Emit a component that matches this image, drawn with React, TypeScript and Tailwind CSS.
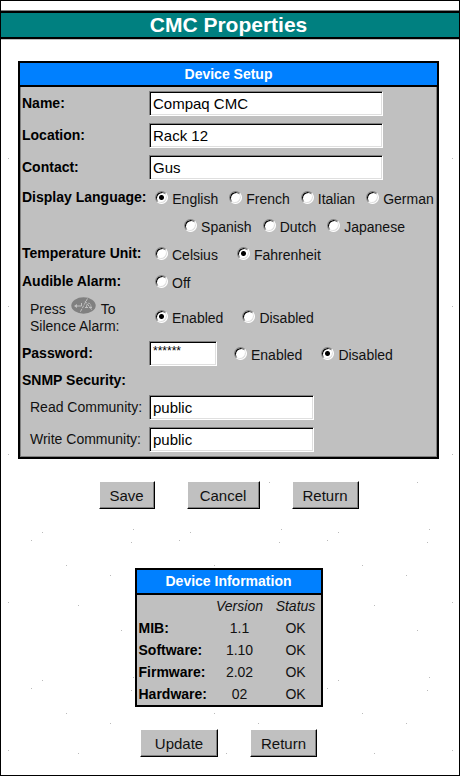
import React from "react";

const font = "font-['Liberation_Sans',Arial,sans-serif]";

const bevelIn =
  "border border-t-[#808080] border-l-[#808080] border-r-white border-b-white shadow-[inset_1px_1px_0_#000,inset_-1px_-1px_0_#dfdfdf]";

function TextField({
  id,
  value,
  width,
  text = "text-[15px]",
}: {
  id: string;
  value: string;
  width: string;
  text?: string;
}) {
  return (
    <input
      id={id}
      type="text"
      autoComplete="off"
      defaultValue={value}
      className={`h-[25px] ${width} px-[3px] bg-white ${text} text-black outline-none ${bevelIn}`}
    />
  );
}

function Radio({
  name,
  text,
  checked,
}: {
  name: string;
  text: string;
  checked?: boolean;
}) {
  return (
    <label className="flex items-center gap-1 whitespace-nowrap">
      <input
        type="radio"
        name={name}
        value={text}
        defaultChecked={checked}
        className={`appearance-none shrink-0 size-[13px] rounded-full bg-white checked:bg-[radial-gradient(circle,#000_2px,#fff_3px)] ${bevelIn}`}
      />
      <span className="pt-1">{text}</span>
    </label>
  );
}

function Button({ text, width }: { text: string; width: string }) {
  return (
    <button
      type="button"
      className={`h-7 ${width} bg-[#c0c0c0] text-[15px] border border-t-white border-l-white border-r-black border-b-black shadow-[inset_-1px_-1px_0_#808080]`}
    >
      {text}
    </button>
  );
}

function Row({
  height,
  label,
  children,
}: {
  height: string;
  label?: React.ReactNode;
  children?: React.ReactNode;
}) {
  return (
    <div className={`flex items-center ${height}`}>
      <div className="w-[128px] shrink-0 pl-px whitespace-nowrap">{label}</div>
      {children}
    </div>
  );
}

function SilenceIcon() {
  return (
    <svg width="25" height="17" viewBox="0 0 25 17" aria-hidden="true">
      <ellipse cx="12.5" cy="8.5" rx="12.2" ry="8.2" fill="#808080" />
      <g fill="none" stroke="#c0c0c0" strokeWidth="1">
        <path d="M10.500 6v3H4" />
        <path d="M3 9l3-2v4z" fill="#c0c0c0" stroke="none" />
        <path d="M16.500 1.500L9 15.500" strokeDasharray="3 1" />
        <path d="M14 10.500h8M15.500 10c0-5 4.500-5 4.500 0M14 4l7 9" strokeDasharray="3 1" />
      </g>
    </svg>
  );
}

const rows = [
  ["MIB:", "1.1", "OK"],
  ["Software:", "1.10", "OK"],
  ["Firmware:", "2.02", "OK"],
  ["Hardware:", "02", "OK"],
];

// speckles of the background tile, repeated every 148px
const specks = [
  [41, 87],
  [30, 95],
  [132, 84],
  [130, 97],
  [65, 120],
  [109, 130],
  [7, 9],
  [77, 12],
  [120, 37],
];

function Speckles() {
  return (
    <svg className="absolute inset-0 -z-10 size-full" aria-hidden="true">
      <pattern
        id="specks"
        width="148"
        height="148"
        patternUnits="userSpaceOnUse"
      >
        {specks.map(([x, y]) => (
          <rect key={`${x}-${y}`} x={x} y={y} width="1" height="1" fill="#bbb" />
        ))}
      </pattern>
      <rect width="100%" height="100%" fill="url(#specks)" />
    </svg>
  );
}

export default function App() {
  return (
    <main
      className={`relative isolate min-h-screen border border-black bg-white pt-[10px] pb-[17px] text-[14px] leading-[17px] text-[#111] ${font}`}
    >
      <Speckles />
      <h1 className="h-7 pl-[17px] pr-5 border-y-2 border-black bg-[#008080] text-center text-[21px] leading-6 font-bold text-white shadow-[0_-1px_0_#808080,0_1px_0_#c0c0c0]">
        CMC Properties
      </h1>

      <div className="flex flex-col items-center pl-[17px] pr-5 pt-[22px]">
        <form className="w-full border-2 border-black bg-[#c0c0c0]">
          <h2 className="h-6 border-b-2 border-black bg-[#0080ff] text-center leading-[23px] font-bold text-white">
            Device Setup
          </h2>
          <div className="border border-t-0 border-[#808080] pb-px">
            <Row
              height="h-8"
              label={<label htmlFor="name" className="font-bold text-black">Name:</label>}
            >
              <TextField id="name" value="Compaq CMC" width="w-[234px]" />
            </Row>
            <Row
              height="h-8"
              label={<label htmlFor="location" className="font-bold text-black">Location:</label>}
            >
              <TextField id="location" value="Rack 12" width="w-[234px]" />
            </Row>
            <Row
              height="h-8"
              label={<label htmlFor="contact" className="font-bold text-black">Contact:</label>}
            >
              <TextField id="contact" value="Gus" width="w-[234px]" />
            </Row>

            <Row height="h-7" label={<b className="text-black">Display Language:</b>}>
              <div className="flex flex-1 justify-center gap-[11px] pl-1">
                <Radio name="language" text="English" checked />
                <Radio name="language" text="French" />
                <Radio name="language" text="Italian" />
                <Radio name="language" text="German" />
              </div>
            </Row>
            <Row height="h-7">
              <div className="flex flex-1 justify-center gap-[11px] pl-1">
                <Radio name="language" text="Spanish" />
                <Radio name="language" text="Dutch" />
                <Radio name="language" text="Japanese" />
              </div>
            </Row>

            <Row height="h-7" label={<b className="text-black">Temperature Unit:</b>}>
              <div className="flex gap-[19px] pl-[6px]">
                <Radio name="temperature" text="Celsius" />
                <Radio name="temperature" text="Fahrenheit" checked />
              </div>
            </Row>

            <Row height="h-7" label={<b className="text-black">Audible Alarm:</b>}>
              <div className="flex gap-[19px] pl-[6px]">
                <Radio name="alarm" text="Off" />
              </div>
            </Row>
            <Row
              height="h-[42px]"
              label={
                <div className="pl-2">
                  <div className="flex items-end gap-[5px]">
                    Press
                    <span className="pb-1">
                      <SilenceIcon />
                    </span>
                    To
                  </div>
                  <div>Silence Alarm:</div>
                </div>
              }
            >
              <div className="flex gap-[19px] pl-[6px]">
                <Radio name="alarm" text="Enabled" checked />
                <Radio name="alarm" text="Disabled" />
              </div>
            </Row>

            <Row
              height="h-8"
              label={<label htmlFor="password" className="font-bold text-black">Password:</label>}
            >
              <TextField id="password" value="******" width="w-[68px]" text="pb-[5px] text-[12px]" />
              <div className="flex gap-[19px] pl-[17px]">
                <Radio name="protection" text="Enabled" />
                <Radio name="protection" text="Disabled" checked />
              </div>
            </Row>

            <Row height="h-[22px]" label={<b className="text-black">SNMP Security:</b>} />
            <Row
              height="h-8"
              label={<label htmlFor="read" className="pl-2">Read Community:</label>}
            >
              <TextField id="read" value="public" width="w-[165px]" />
            </Row>
            <Row
              height="h-8"
              label={<label htmlFor="write" className="pl-2">Write Community:</label>}
            >
              <TextField id="write" value="public" width="w-[165px]" />
            </Row>
          </div>
        </form>

        <div className="mt-[22px] flex gap-8">
          <Button text="Save" width="w-14" />
          <Button text="Cancel" width="w-[73px]" />
          <Button text="Return" width="w-[67px]" />
        </div>

        <section className="mt-[59px] border-2 border-black bg-[#c0c0c0]">
          <h2 className="h-[25px] border-b-2 border-black bg-[#0080ff] text-center leading-[23px] font-bold text-white">
            Device Information
          </h2>
          <table className="w-[184px] table-fixed text-center">
            <thead>
              <tr className="h-[22px] italic">
                <th className="w-[72px] p-0"></th>
                <th className="w-[62px] p-0 font-normal">Version</th>
                <th className="w-[50px] p-0 font-normal">Status</th>
              </tr>
            </thead>
            <tbody>
              {rows.map(([label, version, status]) => (
                <tr key={label} className="h-[22px]">
                  <th className="p-0 pl-[2px] text-left font-bold text-black">{label}</th>
                  <td className="p-0">{version}</td>
                  <td className="p-0">{status}</td>
                </tr>
              ))}
            </tbody>
          </table>
        </section>

        <div className="mt-[22px] flex gap-8">
          <Button text="Update" width="w-[78px]" />
          <Button text="Return" width="w-[67px]" />
        </div>
      </div>
    </main>
  );
}
